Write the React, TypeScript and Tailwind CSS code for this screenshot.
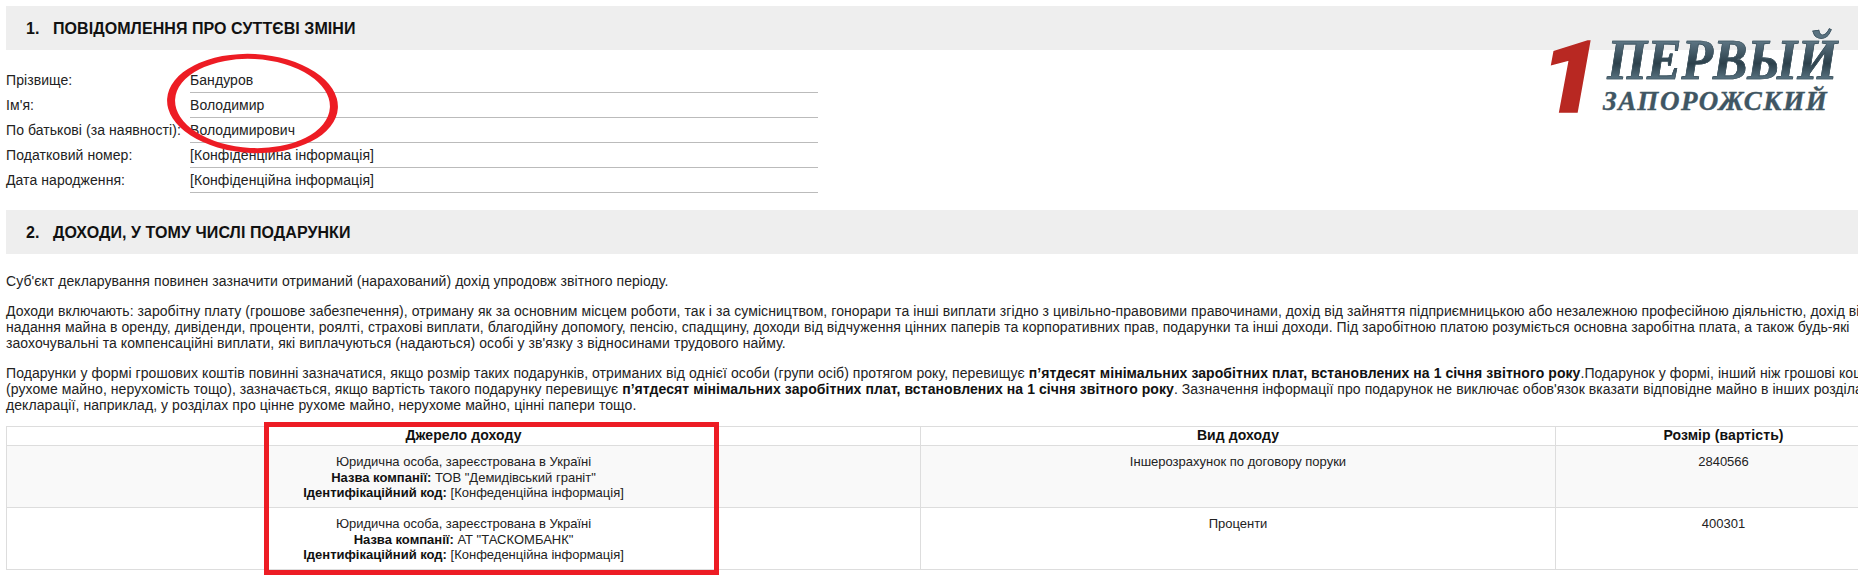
const font = "font-['Liberation_Sans',Arial,sans-serif]";

const person = [
  { label: "Прізвище:", value: "Бандуров" },
  { label: "Ім'я:", value: "Володимир" },
  { label: "По батькові (за наявності):", value: "Володимирович" },
  { label: "Податковий номер:", value: "[Конфіденційна інформація]" },
  { label: "Дата народження:", value: "[Конфіденційна інформація]" },
];

const income = [
  {
    company: 'ТОВ "Демидівський граніт"',
    kind: "Іншерозрахунок по договору поруки",
    amount: "2840566",
    stripe: true,
  },
  { company: 'АТ "ТАСКОМБАНК"', kind: "Проценти", amount: "400301", stripe: false },
];

function SectionTitle({ num, title }: { num: string; title: string }) {
  return (
    <div className="flex h-[44px] items-center bg-[#eeeeee] pl-[20px] pt-[2px] text-[16px] font-bold text-[#111]">
      <span className="w-[27px]">{num}</span>
      <span>{title}</span>
    </div>
  );
}

function Logo() {
  return (
    <div className="absolute left-[1549px] top-[33px] h-[82px] w-[295px]">
      <span className="absolute left-[-9px] top-[9px] origin-left scale-x-[1.08] font-['Roboto',sans-serif] text-[99px] font-black italic leading-[72px] tracking-normal text-[#b82822] [-webkit-text-stroke:1.5px_#b82822]">
        1
      </span>
      <span className="absolute left-[58px] top-[-8px] origin-left scale-x-[0.92] bg-gradient-to-b from-[#5a7280] from-[25%] via-[#2c404b] via-[55%] to-[#5a7482] to-[78%] bg-clip-text pr-[6px] font-['Liberation_Serif',serif] text-[56px] font-bold italic leading-[70px] tracking-normal text-transparent [-webkit-text-stroke:0.7px_#3a505c]">
        ПЕРВЫЙ
      </span>
      <span className="absolute left-[54px] top-[52px] font-['Liberation_Serif',serif] text-[27px] font-bold italic leading-[32px] tracking-[1.6px] text-[#3f5663] [-webkit-text-stroke:0.4px_#3f5663]">
        ЗАПОРОЖСКИЙ
      </span>
    </div>
  );
}

export default function App() {
  return (
    <div className={`relative h-[583px] w-[1858px] overflow-hidden bg-white pl-[6px] pt-[6px] text-[14px] tracking-[0.07px] text-[#222] ${font}`}>
      <SectionTitle num="1." title="ПОВІДОМЛЕННЯ ПРО СУТТЄВІ ЗМІНИ" />

      <div className="mt-[18px]">
        {person.map((row) => (
          <div key={row.label} className="flex h-[25px]">
            <div className="w-[184px] whitespace-nowrap leading-[24px]">{row.label}</div>
            <div className="w-[628px] border-b border-[#bbbbbb] leading-[24px]">{row.value}</div>
          </div>
        ))}
      </div>

      <div className="mt-[17px]">
        <SectionTitle num="2." title="ДОХОДИ, У ТОМУ ЧИСЛІ ПОДАРУНКИ" />
      </div>

      <div className="mt-[19px] whitespace-nowrap leading-[16px]">
        <p>Суб'єкт декларування повинен зазначити отриманий (нарахований) дохід упродовж звітного періоду.</p>
        <p className="mt-[14px]">
          Доходи включають: заробітну плату (грошове забезпечення), отриману як за основним місцем роботи, так і за сумісництвом, гонорари та інші виплати згідно з цивільно-правовими правочинами, дохід від зайняття підприємницькою або незалежною професійною діяльністю, дохід від
          <br />
          надання майна в оренду, дивіденди, проценти, роялті, страхові виплати, благодійну допомогу, пенсію, спадщину, доходи від відчуження цінних паперів та корпоративних прав, подарунки та інші доходи. Під заробітною платою розуміється основна заробітна плата, а також будь-які
          <br />
          заохочувальні та компенсаційні виплати, які виплачуються (надаються) особі у зв'язку з відносинами трудового найму.
        </p>
        <p className="mt-[14px]">
          Подарунки у формі грошових коштів повинні зазначатися, якщо розмір таких подарунків, отриманих від однієї особи (групи осіб) протягом року, перевищує <b className="text-[#111]">п’ятдесят мінімальних заробітних плат, встановлених на 1 січня звітного року</b>.Подарунок у формі, інший ніж грошові кошти
          <br />
          (рухоме майно, нерухомість тощо), зазначається, якщо вартість такого подарунку перевищує <b className="text-[#111]">п’ятдесят мінімальних заробітних плат, встановлених на 1 січня звітного року</b>. Зазначення інформації про подарунок не виключає обов'язок вказати відповідне майно в інших розділах
          <br />
          декларації, наприклад, у розділах про цінне рухоме майно, нерухоме майно, цінні папери тощо.
        </p>
      </div>

      <table className="mt-[13px] w-[1885px] table-fixed border-collapse text-center text-[13px] leading-[15.5px] tracking-normal">
        <colgroup>
          <col className="w-[914px]" />
          <col className="w-[635px]" />
          <col className="w-[336px]" />
        </colgroup>
        <thead>
          <tr className="h-[19px] text-[14px] tracking-[0.1px] text-[#111]">
            <th className="border border-[#dddddd] font-bold">Джерело доходу</th>
            <th className="border border-[#dddddd] font-bold">Вид доходу</th>
            <th className="border border-[#dddddd] font-bold">Розмір (вартість)</th>
          </tr>
        </thead>
        <tbody>
          {income.map((row) => (
            <tr key={row.amount} className={row.stripe ? "bg-[#f9f9f9]" : "bg-white"}>
              <td className="h-[62px] border border-[#dddddd] px-2 align-top pt-[8px]">
                Юридична особа, зареєстрована в Україні
                <br />
                <b className="text-[#111]">Назва компанії:</b> {row.company}
                <br />
                <b className="text-[#111]">Ідентифікаційний код:</b> [Конфеденційна інформація]
              </td>
              <td className="border border-[#dddddd] px-2 align-top pt-[8px]">{row.kind}</td>
              <td className="border border-[#dddddd] px-2 align-top pt-[8px]">{row.amount}</td>
            </tr>
          ))}
        </tbody>
      </table>

      <Logo />

      {/* Red annotations drawn over the scan */}
      <div className="absolute left-[167px] top-[54px] h-[99px] w-[171px] rotate-[3deg] rounded-[50%] border-x-[8px] border-y-[5px] border-[#ed1c24]" />
      <div className="absolute left-[264px] top-[422px] h-[153px] w-[455px] border-[5px] border-[#ed1c24]" />
    </div>
  );
}
